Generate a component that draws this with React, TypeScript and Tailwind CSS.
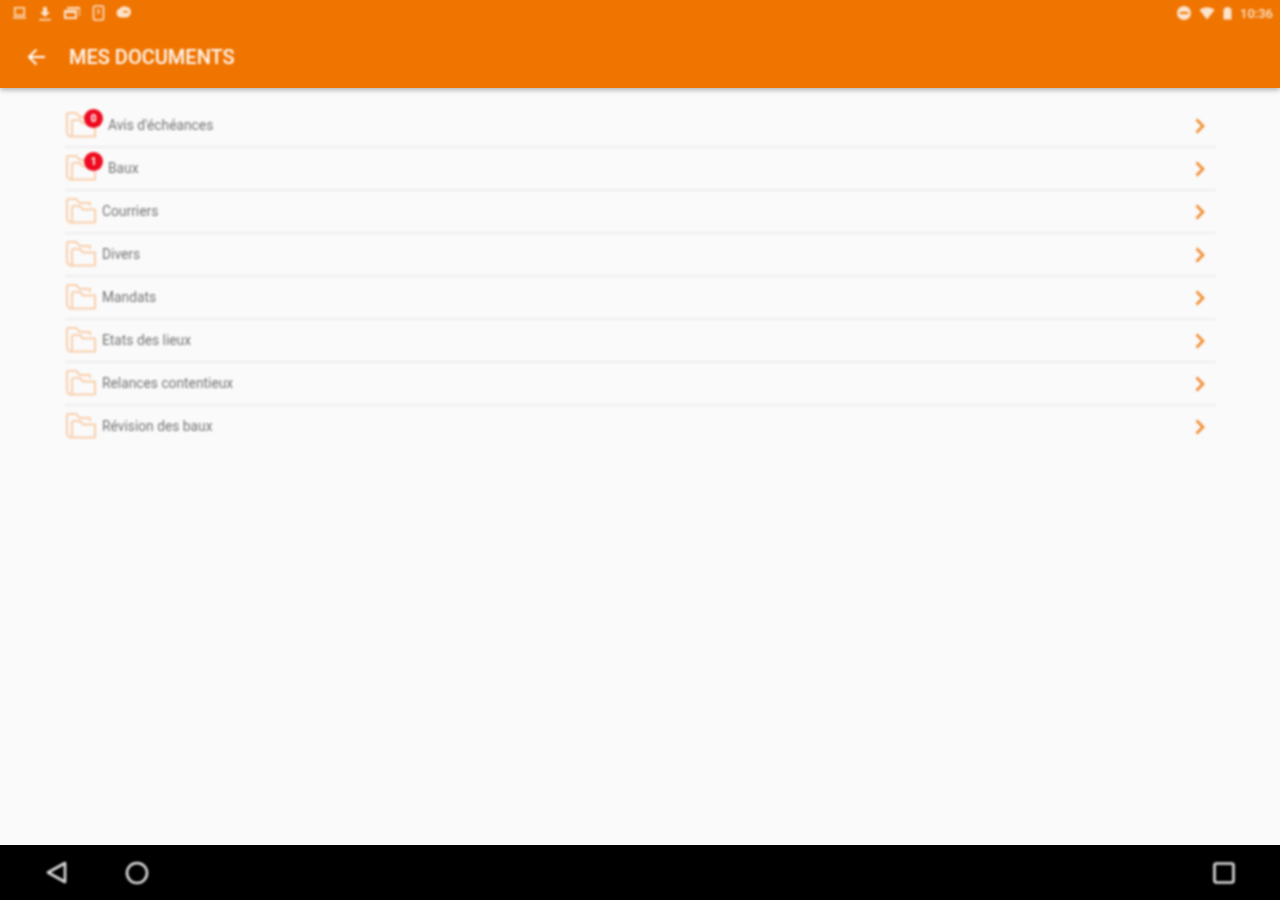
import React from "react";

const rows: { label: string; badge?: string }[] = [
  { label: "Avis d'échéances", badge: "0" },
  { label: "Baux", badge: "1" },
  { label: "Courriers" },
  { label: "Divers" },
  { label: "Mandats" },
  { label: "Etats des lieux" },
  { label: "Relances contentieux" },
  { label: "Révision des baux" },
];

function Folder() {
  return (
    <svg width="32" height="28" viewBox="0 0 32 28" fill="none" stroke="#f9cfac" strokeWidth="2" strokeLinejoin="round" className="-mt-[2px] shrink-0">
      <path d="M7 25.5C4 25.5 2 23.5 2 20.5V4C2 3 3 2 4 2H11L15 6H25V9" />
      <path d="M7 25.5H30V12.5H18L15 9H9C7.8 9 7 9.8 7 11V25.5Z" />
    </svg>
  );
}

function Row({ label, badge, last }: { label: string; badge?: string; last: boolean }) {
  return (
    <div className={`relative flex h-[43px] items-center border-b-2 ${last ? "border-transparent" : "border-[#eeeeee]"}`}>
      <Folder />
      {badge && (
        <span className="absolute left-[19px] top-[4px] flex h-[19px] w-[19px] items-center justify-center rounded-full bg-[#ee0b1f] text-[10px] font-bold leading-none text-white">
          {badge}
        </span>
      )}
      <span className={`text-[13.8px] leading-none text-[#757575] ${badge ? "ml-[11px]" : "ml-[5px]"}`}>{label}</span>
      <svg width="12" height="16" viewBox="0 0 12 16" fill="none" stroke="#f08a2c" strokeWidth="2.6" className="ml-auto mr-[10px]">
        <path d="M2.5 1.5L9 8L2.5 14.5" />
      </svg>
    </div>
  );
}

export default function App() {
  return (
    <div className="flex h-[900px] w-[1280px] flex-col overflow-hidden bg-[#fafafa] font-['Roboto',sans-serif]">
      <header className="z-10 flex h-[88px] shrink-0 flex-col bg-[#f07400] shadow-[0_2px_5px_rgba(0,0,0,0.3)]">
        <div className="flex h-[26px] items-center justify-between pl-[12px] pr-[7px] text-white/80 blur-[0.8px]">
          <div className="flex items-center gap-[11px]">
            <svg width="15" height="14" viewBox="0 0 15 14" fill="currentColor">
              <path fillRule="evenodd" d="M2 1h11v9H2zM3.5 2.5v6h8v-6zM1 11h13v1.5H1z" />
            </svg>
            <svg width="14" height="15" viewBox="0 0 14 15" fill="currentColor">
              <path d="M5 1h4v5h3L7 11 2 6h3zM1 13h12v1.5H1z" />
            </svg>
            <svg width="18" height="14" viewBox="0 0 18 14" fill="currentColor">
              <path fillRule="evenodd" d="M4 1h13v9h-1V3H4zM1 4h13v9H1zM3 7v4h9V7z" />
            </svg>
            <svg width="13" height="16" viewBox="0 0 13 16" fill="none" stroke="currentColor" strokeWidth="1.6">
              <rect x="1.5" y="1" width="10" height="14" rx="1.5" />
              <path d="M6.5 4v5" />
            </svg>
            <svg width="16" height="14" viewBox="0 0 16 14" fill="currentColor">
              <path fillRule="evenodd" d="M9.5 .5a5.5 5.5 0 0 1 0 11H5a4.5 4.5 0 0 1-1.5-8.7A5.5 5.5 0 0 1 9.5 .5zM7 5v1.5h5V5z" />
            </svg>
          </div>
          <div className="flex items-center gap-[7px]">
            <svg width="16" height="16" viewBox="0 0 16 16">
              <circle cx="8" cy="8" r="7" fill="currentColor" />
              <rect x="4" y="7" width="8" height="2" fill="#f07400" />
            </svg>
            <svg width="16" height="13" viewBox="0 0 16 13" fill="currentColor">
              <path d="M0.5 3C5 -0.8 11 -0.8 15.5 3L8 12.5z" />
            </svg>
            <svg width="11" height="14" viewBox="0 0 11 14" fill="currentColor">
              <path d="M3.5 1h4v1.5h2V13.5h-8V2.5h2z" />
            </svg>
            <span className="text-[13px] font-medium leading-none">10:36</span>
          </div>
        </div>
        <div className="flex flex-1 items-center pl-[27px] pb-[1px] blur-[0.8px]">
          <svg width="19" height="18" viewBox="0 0 19 18" fill="none" stroke="white" strokeWidth="2">
            <path d="M18 9H2M9.5 1.5L2 9l7.5 7.5" />
          </svg>
          <h1 className="ml-[23px] text-[20px] font-medium text-white/95">MES DOCUMENTS</h1>
        </div>
      </header>
      <main className="flex-1 pl-[65px] pr-[64px] pt-[17px]">
        <div className="blur-[0.8px]">
          {rows.map((r, i) => (
            <Row key={r.label} label={r.label} badge={r.badge} last={i === rows.length - 1} />
          ))}
        </div>
      </main>
      <nav className="flex h-[55px] shrink-0 items-center justify-between bg-black pl-[46px] pr-[45px] text-[#dddddd]">
        <div className="flex items-center gap-[58px] blur-[0.8px]">
          <svg width="21" height="23" viewBox="0 0 21 23" fill="none" stroke="currentColor" strokeWidth="2.6" strokeLinejoin="round">
            <path d="M19 2L2 11.5L19 21z" />
          </svg>
          <svg width="24" height="24" viewBox="0 0 24 24" fill="none" stroke="currentColor" strokeWidth="2.6">
            <circle cx="12" cy="12" r="10" />
          </svg>
        </div>
        <svg width="22" height="22" viewBox="0 0 22 22" fill="none" stroke="currentColor" strokeWidth="2.6" className="blur-[0.8px]">
          <rect x="1.5" y="1.5" width="19" height="19" rx="2" />
        </svg>
      </nav>
    </div>
  );
}
